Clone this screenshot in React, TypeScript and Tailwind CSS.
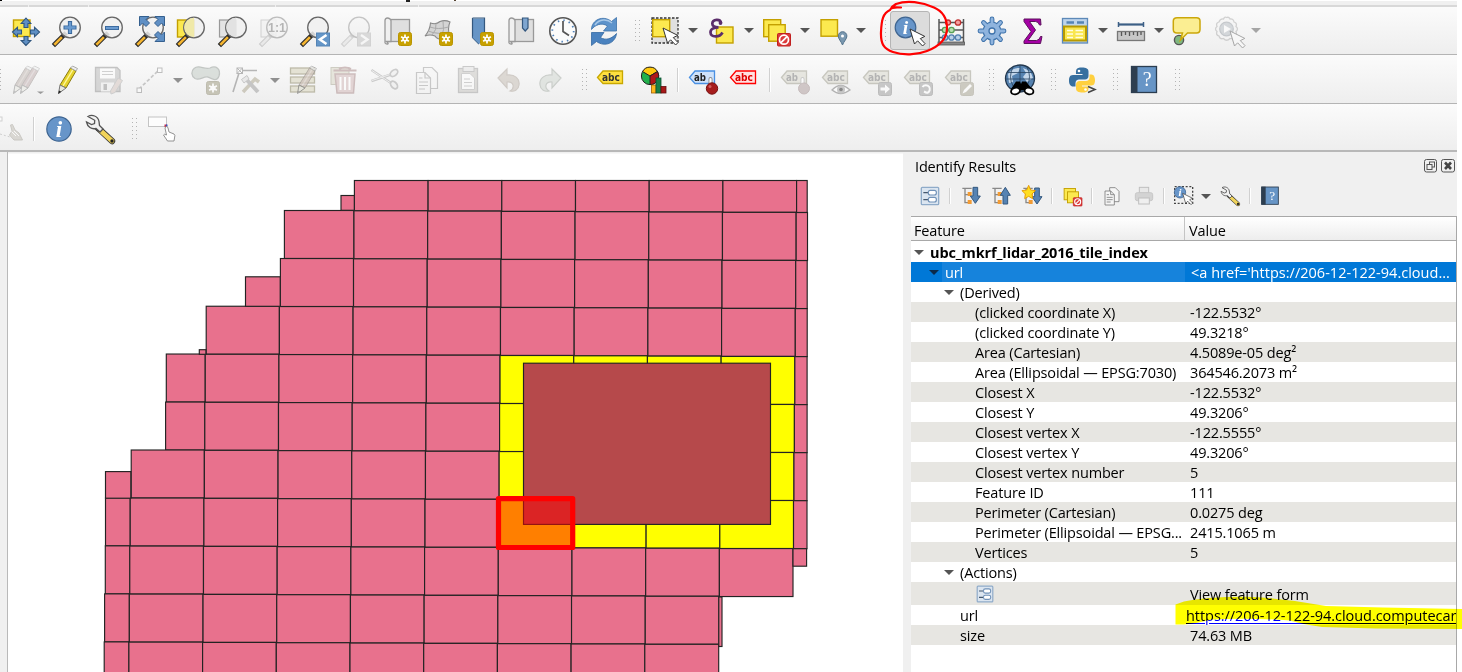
import React from "react";

type Kids = { children?: React.ReactNode; className?: string };

/* ---------- shared drawing pieces ---------- */

function Ico({ children, className = "" }: Kids) {
  return (
    <svg width="30" height="30" viewBox="0 0 30 30" className={"shrink-0 overflow-visible " + className}>
      {children}
    </svg>
  );
}

function Slot({ children, className = "w-[41.2px]" }: Kids) {
  return <div className={"flex h-full shrink-0 items-center justify-center " + className}>{children}</div>;
}

function Arrow({ className = "w-[15px]", color = "#555" }: { className?: string; color?: string }) {
  return (
    <div className={"flex h-full shrink-0 items-center justify-center " + className}>
      <svg width="10" height="5" viewBox="0 0 10 5">
        <path d="M0 0H10L5 5Z" fill={color} />
      </svg>
    </div>
  );
}

function Handle({ className = "" }: { className?: string }) {
  return (
    <div className={"flex h-full shrink-0 items-center " + className}>
      <svg width="6" height="22" viewBox="0 0 6 22">
        {[0, 4, 8, 12, 16, 20].map((y) => (
          <g key={y} fill="#b4b4b4">
            <rect x="0" y={y} width="1" height="1" />
            <rect x="4" y={y} width="1" height="1" />
          </g>
        ))}
      </svg>
    </div>
  );
}

function Sep({ className = "h-6" }: { className?: string }) {
  return <div className={"w-[2px] shrink-0 border-l border-r border-l-[#d0d0d0] border-r-white " + className} />;
}

function Lens({ children, gray = false }: { children?: React.ReactNode; gray?: boolean }) {
  return (
    <g>
      <path d="M3 28L12.500 18.500" stroke={gray ? "#999" : "#2a2a2a"} strokeWidth="4.600" strokeLinecap="square" />
      <path d="M3.200 27.800L9 22" stroke={gray ? "#ddd" : "#f5b530"} strokeWidth="2.600" strokeLinecap="square" />
      <circle cx="18" cy="11.500" r="10.300" fill="#f0f0f0" fillOpacity="0.85" stroke="#666" strokeWidth="1.300" />
      {children}
    </g>
  );
}

function Badge() {
  return (
    <g>
      <rect x="15.500" y="16.500" width="13" height="13" rx="2" fill="#c8a100" stroke="#b89400" />
      <path d="M22 18.500V27.500M18.100 20.800L25.900 25.200M18.100 25.200L25.900 20.800" stroke="#fff" strokeWidth="1.700" />
      <circle cx="22" cy="23" r="2.600" fill="#fff" />
      <circle cx="22" cy="23" r="1.100" fill="#c8a100" />
    </g>
  );
}

function Cursor({ x = 0, y = 0 }: { x?: number; y?: number }) {
  return (
    <path
      transform={`translate(${x} ${y})`}
      d="M0 0L4.500 15L7.600 11.800L12.600 17L15 14.600L10.300 9.600L14.800 7.400Z"
      fill="#fff"
      stroke="#333"
      strokeWidth="1"
    />
  );
}

function Tag({ fill, stroke, color, text = "abc" }: { fill: string; stroke: string; color: string; text?: string }) {
  return (
    <g>
      <path d="M2.500 12.500L8 6H27.500V18.500H8Z" fill={fill} stroke={stroke} strokeWidth="1.300" />
      <text x="7" y="16.200" fontSize="10.500" fontWeight="700" fill={color} fontFamily="'DejaVu Sans', sans-serif" textLength={text === "ab" ? 12 : 18} lengthAdjust="spacingAndGlyphs">
        {text}
      </text>
    </g>
  );
}

function Pencil({ body = "#e5d22c", dark = "#8a7a10", shine = "#fff7a0", lead = "#222", x = 0 }: { body?: string; dark?: string; shine?: string; lead?: string; x?: number }) {
  return (
    <g transform={`translate(${x} 0)`}>
      <path d="M7 20L17.500 3L23 6L13 23Z" fill={body} stroke={dark} strokeWidth="1" />
      <path d="M10 21L20 4.500" stroke={shine} strokeWidth="1.400" />
      <path d="M17.500 3L19.500 1L24.500 3.500L23 6Z" fill="#eee" stroke="#999" strokeWidth=".8" />
      <path d="M7 20L5.500 28.500L13 23Z" fill="#e8e8e0" stroke="#777" strokeWidth="1" />
      <path d="M6 25.500L5.200 29L8.300 26.800Z" fill={lead} />
    </g>
  );
}

function InfoDisc({ cx, cy, r }: { cx: number; cy: number; r: number }) {
  return (
    <g>
      <circle cx={cx} cy={cy} r={r} fill="#6795c9" stroke="#3f6591" strokeWidth="1.200" />
      <text x={cx} y={cy + r * 0.62} fontSize={r * 1.9} fontWeight="700" fontStyle="italic" fill="#fff" textAnchor="middle" fontFamily="'Liberation Serif', serif">
        i
      </text>
    </g>
  );
}

function Wrench() {
  return (
    <g>
      <path d="M13 14L27 27" stroke="#333" strokeWidth="6.400" strokeLinecap="round" />
      <path d="M16 17L27 27" stroke="#f0d35a" strokeWidth="4.600" strokeLinecap="round" />
      <path
        d="M3 2.500C7 0 13 2 14 7.500L14.500 11.500L18 15L15 18L11 14.500C6.500 15.500 2.500 13 1.500 8L6.500 10.500L9.500 9.500L9.700 6.300Z"
        fill="#f1f1f1"
        stroke="#555"
        strokeWidth="1.300"
      />
      <circle cx="27" cy="27" r="1.700" fill="#222" />
    </g>
  );
}

function Book() {
  return (
    <g>
      <rect x="2.500" y="1.500" width="25" height="26" fill="#6795c6" stroke="#2b3d50" strokeWidth="1.300" />
      <rect x="2" y="1" width="6.500" height="27" fill="#2d3e50" />
      <text x="18.200" y="21" fontSize="20" fill="#fff" textAnchor="middle" fontFamily="'Liberation Serif', serif">
        ?
      </text>
    </g>
  );
}

function FormIcon() {
  return (
    <g>
      <rect x="2" y="2" width="26" height="26" rx="1.500" fill="#dbe5f0" stroke="#8fabc9" strokeWidth="2" />
      <path d="M5 10H12M5 20.500H12" stroke="#45586d" strokeWidth="2" />
      <rect x="12.500" y="6.500" width="12" height="7" rx="3" fill="#fff" stroke="#7192b8" strokeWidth="1.800" />
      <rect x="12.500" y="17" width="12" height="7" rx="3" fill="#fff" stroke="#7192b8" strokeWidth="1.800" />
    </g>
  );
}

function Layers() {
  return (
    <g>
      <rect x="1.700" y="3.700" width="17" height="17" fill="#fce94f" stroke="#c4a000" strokeWidth="1.400" />
      <rect x="6.700" y="8.700" width="16.500" height="16.500" fill="#fce94f" stroke="#c4a000" strokeWidth="1.400" />
      <rect x="15.500" y="17.500" width="13" height="12.500" rx="1" fill="#dc3a3a" stroke="#c02020" />
      <circle cx="22" cy="23.700" r="4.500" fill="none" stroke="#fff" strokeWidth="1.700" />
      <path d="M19 26.700L25 20.700" stroke="#fff" strokeWidth="1.700" />
    </g>
  );
}

function Pages() {
  return (
    <g fill="#f6f6f6" stroke="#777" strokeWidth="1.200">
      <path d="M11.500 2.500H20L25.500 8V23.500H11.500Z" />
      <path d="M4.500 7.500H13L18.500 13V28.500H4.500Z" />
      <path d="M13 7.500V13H18.500M7 13H10.500M7 17H16M7 20.500H16M7 24H13" fill="none" />
    </g>
  );
}

function Scroll() {
  return (
    <g fill="#dfdfdf" stroke="#999" strokeWidth="1.300">
      <rect x="6" y="3.500" width="20.500" height="22" />
      <path d="M2 4.500Q2 2 4.500 2T8 4.500V25.500H3.500Q6.500 28 4 28T2 25Z" fill="#f0f0f0" />
    </g>
  );
}

/* ---------- toolbars ---------- */

function NavigationToolbar() {
  return (
    <div className="flex h-[48px] w-full items-center border-b border-[#b4b4b4] bg-gradient-to-b from-[#fbfbfb] to-[#eeeeee] pl-[5.400px]">
      <Slot className="w-[41.300px]">
        <Ico>
          <rect x="2.500" y="4" width="16.500" height="16.500" fill="#fce94f" stroke="#c4a000" strokeWidth="1.400" />
          <g fill="#5f8fc4" stroke="#2f567f" strokeWidth="1.100">
            <path d="M15 2L19.800 7.500H17V11.500H13V7.500H10.200Z" />
            <path d="M15 29.500L10.200 24.500H13V20.500H17V24.500H19.800Z" />
            <path d="M1.500 16L6.500 11.200V14H10.500V18H6.500V20.800Z" />
            <path d="M28.500 16L23.500 20.800V18H19.500V14H23.500V11.200Z" />
          </g>
        </Ico>
      </Slot>
      <Slot className="w-[41.300px]">
        <Ico><Lens><path d="M18 5V18M11.500 11.500H24.500" stroke="#39689c" strokeWidth="4.200" /><path d="M18 6V17M12.500 11.500H23.500" stroke="#6a9bd0" strokeWidth="2.400" /></Lens></Ico>
      </Slot>
      <Slot className="w-[41.300px]">
        <Ico><Lens><path d="M11 12H25" stroke="#39689c" strokeWidth="4" /><path d="M12 12H24" stroke="#6a9bd0" strokeWidth="2.200" /></Lens></Ico>
      </Slot>
      <Slot className="w-[41.300px]">
        <Ico>
          <Lens />
          <g fill="#5f8fc4" stroke="#35608f" strokeWidth="1">
            <path d="M4.500 .500H14L11 3.500L14.500 7L11 10.500L7.500 7L4.500 10Z" />
            <path d="M29.500 .500V10L26.500 7L23 10.500L19.500 7L23 3.500L20 .500Z" />
            <path d="M29.500 25.500H20L23 22.500L19.500 19L23 15.500L26.500 19L29.500 16Z" />
          </g>
        </Ico>
      </Slot>
      <Slot className="w-[41.300px]">
        <Ico>
          <rect x="1.500" y="4" width="16.500" height="17" fill="#fce94f" stroke="#c4a000" strokeWidth="1.400" />
          <Lens><path d="M18 1.700A9.700 9.700 0 0 0 18 21.200Z" fill="#f0e9a8" /></Lens>
        </Ico>
      </Slot>
      <Slot className="w-[41.300px]">
        <Ico>
          <rect x="1.500" y="4" width="16.500" height="17" fill="#e3e3e3" stroke="#999" strokeWidth="1.200" />
          <Lens><path d="M18 1.700A9.700 9.700 0 0 0 18 21.200Z" fill="#e2e2e2" /></Lens>
        </Ico>
      </Slot>
      <Slot className="w-[41.300px]">
        <Ico className="opacity-40">
          <rect x="2" y="4" width="15" height="17" fill="#eee" stroke="#999" />
          <Lens gray><text x="18" y="16" fontSize="12.500" fontWeight="700" textAnchor="middle" fill="#555" fontFamily="'Liberation Sans', sans-serif">1:1</text></Lens>
        </Ico>
      </Slot>
      <Slot className="w-[41.300px]">
        <Ico>
          <Lens />
          <rect x="16.500" y="17" width="13" height="13" fill="#6496c8" stroke="#5584b5" />
          <path d="M26.500 19L20 23.500L26.500 28" fill="none" stroke="#fff" strokeWidth="2.600" />
        </Ico>
      </Slot>
      <Slot className="w-[41.300px]">
        <Ico className="opacity-35">
          <Lens gray />
          <rect x="16.500" y="17" width="13" height="13" fill="#aaa" stroke="#999" />
          <path d="M20 19L26.500 23.500L20 28" fill="none" stroke="#fff" strokeWidth="2.400" />
        </Ico>
      </Slot>
      <Slot className="w-[41.300px]"><Ico><Scroll /><Badge /></Ico></Slot>
      <Slot className="w-[41.300px]">
        <Ico>
          <path d="M1 20Q6 14 6.500 7Q12 9 16 5.500Q21 3.500 26 6Q23 12 26 23Q14 25 11 20Q6 18 1 20Z" fill="#d4d4d4" stroke="#888" strokeWidth="1.100" />
          <path d="M4 15Q14 19 24.500 16M6 11Q14 14 24.500 11M12 7.500Q13 14 8 19M19 5Q21 13 17 23" fill="none" stroke="#aaa" />
          <Badge />
        </Ico>
      </Slot>
      <Slot className="w-[41.300px]">
        <Ico>
          <path d="M7.500 2.500H19.500V27.500L7.500 21.500Z" fill="#6795c6" />
          <path d="M7.500 2H19.500V17M7.500 2V21.500L14 28" fill="none" stroke="#34587f" strokeWidth="1.200" />
          <path d="M7.500 21.500L14 28L17 25V20H8Z" fill="#6795c6" />
          <Badge />
        </Ico>
      </Slot>
      <Slot className="w-[41.300px]">
        <Ico><Scroll /><path d="M15.500 2H21V12L18.200 15L15.500 12Z" fill="#7fa6d0" stroke="#34587f" strokeWidth="1.200" /></Ico>
      </Slot>
      <Slot className="w-[41.300px]">
        <Ico>
          <circle cx="15" cy="15" r="13.200" fill="#fbfbfb" stroke="#555" strokeWidth="1.600" />
          <circle cx="15" cy="15" r="10.700" fill="none" stroke="#4f80b8" strokeWidth="1.800" strokeDasharray="1.500 4.100" />
          <path d="M15 5V15.500L21 19.500" fill="none" stroke="#555" strokeWidth="1.700" />
        </Ico>
      </Slot>
      <Slot className="w-[41.300px]">
        <Ico>
          <path d="M2.500 13.500C2.500 4 14 -1.500 22.500 5.500L27.500 1.500V15H14.500L18.500 10C12.500 6 6 9 2.500 13.500Z" fill="#5d93cb" stroke="#3c71a9" strokeWidth=".8" />
          <path d="M27.500 17.500C26.500 27 16 31.500 7.500 25.500L2.500 29.500V16.500H15L11.500 21.500C17 25 23 22.500 27.500 17.500Z" fill="#4a82bf" stroke="#3569a2" strokeWidth=".8" />
          <path d="M6 9C10 3 18 2.500 23 7" stroke="#a8c8e8" strokeWidth="1.500" fill="none" />
        </Ico>
      </Slot>
      <Handle className="ml-[10px] mr-[3.500px]" />
      <Slot className="w-[41px]">
        <Ico>
          <rect x="2" y="2" width="26" height="25" fill="#e0e0e0" stroke="#333" strokeDasharray="2.500 1.500" strokeWidth="1.300" />
          <rect x="2.700" y="3.700" width="17" height="17" fill="#fce94f" stroke="#c4a000" strokeWidth="1.400" />
          <Cursor x={13} y={12} />
        </Ico>
      </Slot>
      <Arrow />
      <Slot className="w-[41px]">
        <Ico>
          <rect x="10.500" y="11" width="16.500" height="16" fill="#fce94f" stroke="#c4a000" strokeWidth="1.400" />
          <path d="M15 7C14.500 2.500 6.500 3 6.300 7.500C6.200 10.500 9 11.300 12.500 11.300C8 11.500 4.300 13 4.500 16.500C4.800 21.500 13.500 22 16.500 16.500" fill="none" stroke="#5b2d6b" strokeWidth="2.700" />
          <circle cx="14.500" cy="7" r="1.900" fill="#5b2d6b" />
        </Ico>
      </Slot>
      <Arrow />
      <Slot className="w-[41px]"><Ico><Layers /></Ico></Slot>
      <Arrow />
      <Slot className="w-[41px]">
        <Ico>
          <rect x="3" y="3.700" width="16.500" height="16.500" fill="#fce94f" stroke="#c4a000" strokeWidth="1.400" />
          <path d="M24.500 29C23 25 20.300 23 20.300 20A4.300 4.300 0 0 1 28.900 20C28.900 23 26 25 24.500 29Z" fill="#7a98b0" stroke="#54738c" />
          <circle cx="24.500" cy="20" r="1.500" fill="#fff" />
        </Ico>
      </Slot>
      <Arrow />
      <Handle className="ml-[13px] mr-[2px]" />
      <Slot className="w-[41px]">
        <div className="flex h-[39px] w-[40px] items-center justify-center rounded-[3px] border-[1.500px] border-[#b5b5b5] bg-[#dcdcdc]">
          <Ico><InfoDisc cx={10.5} cy={11.5} r={10.3} /><Cursor x={15} y={13} /></Ico>
        </div>
      </Slot>
      <Slot className="w-[41px]">
        <Ico>
          <path d="M3 3V26M27.500 3V26M3 6.500H27.500M3 14H27.500M3 21.500H27.500" fill="none" stroke="#555" strokeWidth="1.500" />
          <rect x="2" y="26" width="26.500" height="3" fill="#888" stroke="#555" strokeWidth=".8" />
          <g strokeWidth="1.300">
            <g fill="#f4a0a0" stroke="#c03030"><circle cx="12" cy="6.500" r="2.500" /><circle cx="22" cy="6.500" r="2.700" /></g>
            <g fill="#b8e0b0" stroke="#58a058"><circle cx="9" cy="14" r="2.700" /><circle cx="15.500" cy="14" r="2.700" /></g>
            <g fill="#b9d0e8" stroke="#5080b0"><circle cx="9" cy="21.500" r="2.700" /><circle cx="15.500" cy="21.500" r="2.700" /><circle cx="22" cy="21.500" r="2.700" /></g>
          </g>
        </Ico>
      </Slot>
      <Slot className="w-[41px]">
        <Ico>
          <path d="M15 3V27M3 15H27M6.500 6.500L23.500 23.500M23.500 6.500L6.500 23.500" stroke="#3f73ab" strokeWidth="4.800" strokeLinecap="round" />
          <circle cx="15" cy="15" r="8.800" fill="#8fb4de" stroke="#3f73ab" strokeWidth="1.200" />
          <path d="M15 3V27M3 15H27M6.500 6.500L23.500 23.500M23.500 6.500L6.500 23.500" stroke="#8fb4de" strokeWidth="2.800" strokeLinecap="round" />
          <circle cx="15" cy="15" r="3" fill="#f4f4f4" stroke="#3f73ab" strokeWidth="1.300" />
        </Ico>
      </Slot>
      <Slot className="w-[42px]">
        <Ico><path d="M6 3H22.500L23 9H21.500Q20.500 5.500 17.500 5.500H11.500L17.500 14L10 24.500H18.500Q21.500 24 22.500 20.500H24L22.500 27.500H6V25L13 15.500L6 5.500Z" fill="#a500a5" stroke="#5d125d" strokeWidth="1" /></Ico>
      </Slot>
      <Slot className="w-[41px]">
        <Ico>
          <rect x="2.500" y="2.500" width="25" height="24.500" fill="#bdd4eb" stroke="#5d89b8" strokeWidth="1.300" />
          <path d="M6.500 6.500H14M17 6.500H24" stroke="#5584b5" strokeWidth="2.600" />
          <rect x="4" y="10.500" width="22" height="14" fill="#f9e64e" stroke="#b89a00" strokeWidth="2" />
          <path d="M7 14.500H13M15.500 14.500H23M7 18H13M15.500 18H23M7 21.500H13M15.500 21.500H23" stroke="#fffde0" strokeWidth="1.600" />
        </Ico>
      </Slot>
      <Arrow />
      <Slot className="w-[41px]">
        <Ico>
          <path d="M2 8.500H28" stroke="#3c5f86" strokeWidth="2.200" />
          <path d="M2.500 6V11M27.500 6V11" stroke="#3c5f86" strokeWidth="1.500" />
          <rect x="1.500" y="15.500" width="27" height="9" fill="#c7c7c7" stroke="#777" strokeWidth="1.300" />
          <path d="M5.500 16V20M9.500 16V19M13.500 16V20M17.500 16V19M21.500 16V20M25 16V19" stroke="#555" strokeWidth="1.300" />
        </Ico>
      </Slot>
      <Arrow />
      <Slot className="w-[41px]">
        <Ico>
          <circle cx="7" cy="24" r="4.600" fill="#7fb77f" stroke="#555" strokeWidth="1.400" />
          <path d="M5 1.700H24.500Q28 1.700 28 5V13.500Q28 17 24.500 17H15.500L8.500 24L10.500 17H5Q1.300 17 1.300 13.500V5Q1.300 1.700 5 1.700Z" fill="#fbee92" stroke="#cba70a" strokeWidth="1.500" />
        </Ico>
      </Slot>
      <Slot className="w-[41px]">
        <Ico className="opacity-40">
          <path d="M13.500 1.500Q16 .5 17 3Q20.500 2.500 21 6Q24.500 7 23 10.500Q26 13 23 15.500Q24.500 19 21 20Q20.500 23.500 17 22.500Q13.500 26 10.500 22.500Q7 23.500 6 20Q2.500 19 4 15.500Q1 13 4 10.500Q2.500 7 6 6Q7 2.500 10.500 3Q11.500 .5 13.500 1.500Z" fill="#f4f4f4" stroke="#999" strokeWidth="1.300" />
          <circle cx="13.500" cy="13" r="6.800" fill="#a5adb5" stroke="#7d868e" strokeWidth="1.200" />
          <path d="M11 9L18 13L11 17Z" fill="#fff" />
          <Cursor x={17} y={15} />
        </Ico>
      </Slot>
      <Arrow color="#a5a5a5" />
    </div>
  );
}

function EditingToolbar() {
  const gray = { fill: "#dddcd2", stroke: "#aaa99c", color: "#888" };
  return (
    <div className="flex h-[49px] w-full items-center border-b border-[#b4b4b4] bg-gradient-to-b from-[#fbfbfb] to-[#eeeeee] pt-[2px]">
      <Handle className="-ml-[4px] mr-[4px]" />
      <Slot className="w-[41px]">
        <Ico>
          <g opacity=".45">
            <Pencil x={-4} body="#b4a8a2" dark="#8d8480" shine="#ccc2bc" lead="#888" />
            <Pencil x={3} body="#b8a2a2" dark="#8d8480" shine="#d0c4c4" lead="#888" />
          </g>
          <path d="M25 26.500H32L28.500 29Z" fill="#999" />
        </Ico>
      </Slot>
      <Slot className="w-[41px]"><Ico><Pencil /></Ico></Slot>
      <Slot>
        <Ico className="opacity-40">
          <path d="M1.500 2.500H23L26 5.500V26.500H1.500Z" fill="#aaa" stroke="#777" strokeWidth="1.300" />
          <rect x="6" y="3.500" width="15" height="10" fill="#fff" /><path d="M8 6.500H19M8 9.500H19" stroke="#999" />
          <rect x="7" y="17.500" width="13" height="9" fill="#eee" /><rect x="9.500" y="19" width="3.500" height="6" fill="#777" />
          <path d="M16.500 26L24 13L28.500 15.500L21 27.500L17 29Z" fill="#ccb8b0" stroke="#999" />
        </Ico>
      </Slot>
      <Slot>
        <Ico className="opacity-50">
          <path d="M4 24L24 5" stroke="#999" strokeWidth="1.700" strokeDasharray="3.500 2" />
          <rect x="2" y="23" width="4.500" height="4.500" fill="#fff" stroke="#888" /><rect x="22.500" y="3" width="4.500" height="4.500" fill="#fff" stroke="#888" />
        </Ico>
      </Slot>
      <Arrow color="#909090" />
      <Slot className="w-[41px]">
        <Ico className="opacity-65">
          <path d="M3 3.500C8 -1 13 5 19 3C25 0 30 4 28 11C26 17 21 14 17 12C12 11 9 16 4 13.500C0 11 0 6 3 3.500Z" fill="#ccd3ce" stroke="#a6aca8" strokeWidth="1.300" />
          <rect x="15.500" y="16.500" width="13" height="13" rx="2" fill="#b0ad98" stroke="#a29f8b" />
          <path d="M22 18.500V27.500M18.100 20.800L25.900 25.200M18.100 25.200L25.900 20.800" stroke="#fff" strokeWidth="1.700" />
          <circle cx="22" cy="23" r="2.600" fill="#fff" />
        </Ico>
      </Slot>
      <Slot className="w-[41px]">
        <Ico className="opacity-50">
          <path d="M1 27L7 8M10 5.500H25" fill="none" stroke="#777" strokeWidth="1.600" />
          <rect x="5" y="3" width="5.500" height="5.500" fill="#fff" stroke="#777" /><path d="M5 3L10.500 8.500M10.500 3L5 8.500" stroke="#777" />
          <path d="M11 27L23 14L27 17" fill="none" stroke="#aaa38c" strokeWidth="3.500" />
          <path d="M13 13L26 27" stroke="#999" strokeWidth="4" /><path d="M9.500 14.500L15 10.500L17 14L12 18Z" fill="#ddd" stroke="#999" />
        </Ico>
      </Slot>
      <Arrow color="#909090" />
      <Slot>
        <Ico>
          <g fill="#e4e2d4" stroke="#bdbba9" strokeWidth="1.300"><rect x="2.500" y="3" width="24" height="6" /><rect x="2.500" y="12" width="24" height="6" /><rect x="2.500" y="21" width="24" height="6" /></g>
          <g opacity=".7"><Pencil x={4} body="#d0c4bc" dark="#a09894" shine="#e2dad6" lead="#999" /></g>
        </Ico>
      </Slot>
      <Slot>
        <Ico className="opacity-60">
          <rect x="2" y="2.500" width="18" height="17" fill="#dcdacb" stroke="#b3b1a0" />
          <path d="M6 9H26L24.500 28H8Z" fill="#d7c0c0" stroke="#b49898" strokeWidth="1.500" />
          <path d="M4.500 5.500H27.500M10 4Q16 1 22 4" stroke="#b49898" strokeWidth="2.200" fill="none" />
          <path d="M11.500 12V25M16 12V25M20.500 12V25" stroke="#fff" strokeWidth="2" />
        </Ico>
      </Slot>
      <Slot>
        <Ico className="opacity-45">
          <path d="M1.500 5L21 18M1.500 16L21 9.500" stroke="#999" strokeWidth="2.400" /><path d="M2 5.500L20 17.500M2 15.500L20 9.500" stroke="#e5e5e5" strokeWidth="1" />
          <ellipse cx="24" cy="8" rx="4.300" ry="2.800" transform="rotate(-40 24 8)" fill="#eee" stroke="#999" strokeWidth="1.800" />
          <ellipse cx="24" cy="20" rx="2.800" ry="4.300" fill="#eee" stroke="#999" strokeWidth="1.800" transform="rotate(-40 24 20)" />
        </Ico>
      </Slot>
      <Slot><Ico className="opacity-35"><Pages /></Ico></Slot>
      <Slot>
        <Ico className="opacity-40">
          <rect x="5.500" y="3.500" width="19" height="24" fill="#bcbab4" stroke="#888" strokeWidth="1.300" />
          <rect x="10" y="1.500" width="11" height="5" fill="#ddd" stroke="#888" />
          <path d="M8.500 8.500H17L21.500 13V24.500H8.500Z" fill="#fff" stroke="#999" /><path d="M11 14H17M11 17.500H19M11 21H19" stroke="#999" />
        </Ico>
      </Slot>
      <Slot>
        <Ico className="opacity-60"><path d="M4 13L13 4V10C21 9 26 14 25 20C24.500 25 20 27 16 26C21 23 20 16.500 13 17V23Z" fill="#ccc5bd" stroke="#b8b0a8" strokeWidth="1.200" /></Ico>
      </Slot>
      <Slot>
        <Ico className="opacity-60"><path d="M26 13L17 4V10C9 9 4 14 5 20C5.500 25 10 27 14 26C9 23 10 16.500 17 17V23Z" fill="#d4dad4" stroke="#b0b6b0" strokeWidth="1.200" /></Ico>
      </Slot>
      <Handle className="ml-[11px] mr-[1.500px]" />
      <Slot className="w-[41px]"><Ico><Tag fill="#ffe040" stroke="#c9a800" color="#333" /></Ico></Slot>
      <Slot className="ml-[2px] w-[42px]">
        <Ico>
          <circle cx="12" cy="11" r="8.600" fill="#22b14c" stroke="#222" />
          <path d="M12 11L4.500 6.500A8.600 8.600 0 0 1 19.500 6.500Z" fill="#ffc90e" stroke="#222" />
          <path d="M12 11L19.500 6.500A8.600 8.600 0 0 1 12 19.600Z" fill="#b01818" stroke="#222" />
          <rect x="13.500" y="20" width="4.500" height="8" fill="#ffb81e" stroke="#a06000" strokeWidth=".8" />
          <rect x="18" y="13" width="5" height="15" fill="#188048" stroke="#0c5030" strokeWidth=".8" />
          <rect x="23" y="21.500" width="5" height="6.500" fill="#a81818" stroke="#601010" strokeWidth=".8" />
        </Ico>
      </Slot>
      <Sep className="ml-[3px] h-6" />
      <Slot className="ml-[2px] w-[41px]">
        <Ico>
          <Tag fill="#cfe2fa" stroke="#4a90e2" color="#222" text="ab" />
          <path d="M23.500 22V14" stroke="#888" strokeWidth="4" strokeLinecap="round" /><path d="M23.500 21V14" stroke="#fff" strokeWidth="2.200" strokeLinecap="round" />
          <circle cx="25" cy="23.500" r="5.700" fill="#a61d1d" stroke="#711" /><circle cx="23" cy="21.500" r="1.500" fill="#d06060" />
        </Ico>
      </Slot>
      <Slot className="w-[41px]"><Ico><Tag fill="#ffe0e0" stroke="#f00" color="#e00000" /></Ico></Slot>
      <Sep className="ml-[6px] h-6" />
      <Slot className="ml-[2px] w-[41px]">
        <Ico className="opacity-60">
          <Tag {...gray} text="ab" />
          <path d="M23.500 22V14" stroke="#aaa" strokeWidth="4" strokeLinecap="round" /><path d="M23.500 21V14" stroke="#fff" strokeWidth="2.200" strokeLinecap="round" />
          <circle cx="25" cy="23.500" r="5.500" fill="#b9aaaa" stroke="#a99" />
        </Ico>
      </Slot>
      <Slot>
        <Ico className="opacity-60">
          <Tag {...gray} />
          <path d="M12 25Q20.500 16 30 25Q20.500 32 12 25Z" fill="#fff" stroke="#888" strokeWidth="1.300" /><circle cx="21" cy="24.500" r="4" fill="#aaa" /><circle cx="21" cy="24.500" r="1.800" fill="#444" />
        </Ico>
      </Slot>
      <Slot>
        <Ico className="opacity-60">
          <Tag {...gray} /><rect x="17.500" y="17.500" width="13" height="13" rx="2" fill="#aaa" stroke="#999" />
          <path d="M19.500 22.500H24V19.500L29 24L24 28.500V25.500H19.500Z" fill="#fff" />
        </Ico>
      </Slot>
      <Slot>
        <Ico className="opacity-60">
          <Tag {...gray} /><rect x="17.500" y="17.500" width="13" height="13" rx="2" fill="#aaa" stroke="#999" />
          <path d="M20.500 22A4 4 0 1 1 25 28M25 28L22 26.500" fill="none" stroke="#fff" strokeWidth="2" />
        </Ico>
      </Slot>
      <Slot>
        <Ico className="opacity-60">
          <Tag {...gray} /><rect x="17.500" y="17.500" width="13" height="13" rx="2" fill="#b3b0a0" stroke="#aaa799" />
          <path d="M19.500 28.500L21 25L27 19L29 21L23 27Z" fill="#fff" />
        </Ico>
      </Slot>
      <Handle className="ml-[10px] mr-[4px]" />
      <Slot className="ml-[1px] w-[41px]">
        <Ico>
          <ellipse cx="15" cy="13.500" rx="14.500" ry="13.500" fill="#5582b0" stroke="#23384f" strokeWidth="1.300" />
          <path d="M3 9Q8 2 15 3L13 8L7 11L8 17L4 18ZM18 3Q26 5 28 13L22 17L18 12L21 8Z" fill="#c3d6ea" />
          <path d="M1 14H29M3 7.500H27M15 .5V20M8 2Q3 12 8 21M22 2Q27 12 22 21" fill="none" stroke="#27435f" strokeWidth=".8" />
          <path d="M6 24L11 16.500H15L16 19L17 16.500H21L27 24L18 25.500H15Z" fill="#000" />
          <ellipse cx="10.500" cy="26" rx="4.500" ry="3.200" fill="#fff" stroke="#000" strokeWidth="1.800" transform="rotate(-15 10.500 26)" />
          <ellipse cx="24" cy="26" rx="4.500" ry="3.200" fill="#fff" stroke="#000" strokeWidth="1.800" transform="rotate(15 24 26)" />
        </Ico>
      </Slot>
      <Handle className="ml-[10px] mr-[5px]" />
      <Slot className="w-[41px]">
        <Ico>
          <path d="M15 2.500C8.500 2.500 9 5 9 9H15.500V10H6C2.500 10 2 13 2 16S3.500 21.500 6 21.500H8.500V18C8.500 15.500 10.500 14.500 12 14.500H18C20 14.500 21.500 13 21.500 11V6.500C21.500 3.500 19 2.500 15 2.500Z" fill="#376f9f" />
          <path d="M15.500 27.500C22 27.500 21.500 25 21.500 21.500H15V20.500H24.500C27.500 20.500 28 17.500 28 15S27 9.500 24.500 9.500H22.500V12.500C22.500 15 20.500 16 19 16H12.500C10.500 16 9 17.500 9 19.500V23.500C9 26.500 12 27.500 15.500 27.500Z" fill="#ffd03f" />
          <circle cx="12" cy="6" r="1.300" fill="#fff" /><circle cx="18.500" cy="24.500" r="1.300" fill="#fff" />
          <path d="M21 21.500L28 24.500L21 27.500" fill="none" stroke="#444" strokeWidth="1.500" />
        </Ico>
      </Slot>
      <Handle className="ml-[10px] mr-[5px]" />
      <Slot className="w-[41px]"><Ico><Book /></Ico></Slot>
      <Handle className="ml-[10px]" />
    </div>
  );
}

function AttributesToolbar() {
  return (
    <div className="flex h-[46px] w-full items-center bg-gradient-to-b from-[#fbfbfb] to-[#eeeeee] pt-[3px]">
      <Slot className="w-[33px]">
        <Ico className="opacity-40">
          <rect x="-5" y="3" width="5" height="4" fill="#fff" stroke="#999" />
          <path d="M-2 20L8 23" stroke="#999" strokeDasharray="2 2" />
          <path d="M8.500 11L10.500 10.500L13 16L17 19L20.500 26L12 26L7.500 21L10 17Z" fill="#b5b0a4" stroke="#8b877c" />
          <path d="M9.500 17.500L14 22M12 17L17 22" stroke="#fff" />
        </Ico>
      </Slot>
      <Sep className="h-6" />
      <Slot className="ml-[2px] w-[41px]"><Ico><InfoDisc cx={16} cy={15} r={12.2} /></Ico></Slot>
      <Slot className="w-[44px]"><Ico><Wrench /></Ico></Slot>
      <Handle className="ml-[10px] mr-[4px]" />
      <Slot className="w-[38px]">
        <Ico>
          <rect x="2.500" y="3" width="18" height="9.500" fill="#fdfdfd" stroke="#c4c4c4" />
          <rect x="18.500" y="10.500" width="2.500" height="2.500" fill="#c03050" /><rect x="20" y="10.500" width="1.500" height="2" fill="#3050c0" />
          <path d="M20 12.500Q21.500 12 22 14L23 18L28 20Q29.500 21 28.500 24L28 27H21.500L17.500 21Q18 19.500 20.500 21L19 14Z" fill="#fff" stroke="#888" strokeWidth=".9" />
        </Ico>
      </Slot>
    </div>
  );
}

/* ---------- map canvas ---------- */

type Cell = { x: number; y: number; w: number; h: number; fill: string };

const PINK = "#e8718d";
const YELLOW = "#ffff00";
const LEFT = [354.4, 284.4, 280.4, 206.2, 166.3, 165.6, 131.2, 105.5, 105.3, 104.6, 104.2];
const RIGHT = [807.2, 807.5, 807.2, 807.2, 807.1, 807.1, 807, 807, 793, 718.9, 718.7];

function buildCells(): Cell[] {
  const cells: Cell[] = [];
  LEFT.forEach((left, r) => {
    const shift = r * 0.44;
    const edges = [left];
    for (let c = -6; c <= 4; c++) {
      const x = 501.8 + c * 73.7 - shift;
      if (x > left + 2 && x < RIGHT[r] - 2) edges.push(x);
    }
    edges.push(RIGHT[r]);
    for (let i = 0; i < edges.length - 1; i++) {
      const x = edges[i];
      const mid = (x + edges[i + 1]) / 2;
      const lift = (mid - 350) * 0.0042;
      const y = r === 0 ? 180.5 : 162.6 + r * 48.03 + lift;
      const bottom = 210.6 + r * 48.03 + lift;
      const yellow = r >= 4 && r <= 7 && mid > 499 && mid < 794;
      cells.push({ x, y, w: edges[i + 1] - x, h: bottom - y, fill: yellow ? YELLOW : PINK });
    }
  });
  const extra = [
    [341, 195.5, 13.3, 14.8],
    [245.5, 276.8, 34.7, 29.5],
    [199.3, 349.7, 6.6, 4.6],
    [105.5, 471.6, 25.3, 26.6],
    [793, 548.7, 13.6, 17.5],
    [718.8, 597, 3.2, 49.5],
  ];
  extra.forEach(([x, y, w, h]) => cells.push({ x, y, w, h, fill: PINK }));
  return cells;
}

const CELLS = buildCells();

function MapCanvas() {
  return (
    <div className="h-full w-[896px] shrink-0 overflow-hidden border-l border-[#b9b9b9] bg-white">
      <svg width="895" height="520" viewBox="8 152 895 520" className="block">
        <rect x="8" y="152" width="895" height="1.500" fill="#f0f0f0" />
        <g stroke="#232323" strokeWidth="1.150">
          {CELLS.map((c, i) => (
            <rect key={i} x={c.x} y={c.y} width={c.w} height={c.h} fill={c.fill} />
          ))}
          <rect x="523.500" y="363.200" width="247" height="161.200" fill="#b6494b" />
        </g>
        <rect x="498.500" y="498.700" width="74.200" height="48.800" rx=".5" fill="#ff0000" fillOpacity=".5" />
        <rect x="498.500" y="498.700" width="74.200" height="48.800" fill="none" stroke="#ff0000" strokeWidth="5.200" strokeLinejoin="round" />
      </svg>
    </div>
  );
}

/* ---------- identify panel ---------- */

type Row = { label?: string; value?: string; indent: string; open?: boolean; bold?: boolean; selected?: boolean; form?: boolean; link?: boolean };

const ROWS: Row[] = [
  { label: "ubc_mkrf_lidar_2016_tile_index", indent: "pl-[3px]", open: true, bold: true },
  { label: "url", value: "<a href='https://206-12-122-94.cloud...", indent: "pl-[18px]", open: true, selected: true },
  { label: "(Derived)", indent: "pl-[33px]", open: true },
  { label: "(clicked coordinate X)", value: "-122.5532°", indent: "pl-[64px]" },
  { label: "(clicked coordinate Y)", value: "49.3218°", indent: "pl-[64px]" },
  { label: "Area (Cartesian)", value: "4.5089e-05 deg²", indent: "pl-[64px]" },
  { label: "Area (Ellipsoidal — EPSG:7030)", value: "364546.2073 m²", indent: "pl-[64px]" },
  { label: "Closest X", value: "-122.5532°", indent: "pl-[64px]" },
  { label: "Closest Y", value: "49.3206°", indent: "pl-[64px]" },
  { label: "Closest vertex X", value: "-122.5555°", indent: "pl-[64px]" },
  { label: "Closest vertex Y", value: "49.3206°", indent: "pl-[64px]" },
  { label: "Closest vertex number", value: "5", indent: "pl-[64px]" },
  { label: "Feature ID", value: "111", indent: "pl-[64px]" },
  { label: "Perimeter (Cartesian)", value: "0.0275 deg", indent: "pl-[64px]" },
  { label: "Perimeter (Ellipsoidal — EPSG...", value: "2415.1065 m", indent: "pl-[64px]" },
  { label: "Vertices", value: "5", indent: "pl-[64px]" },
  { label: "(Actions)", indent: "pl-[33px]", open: true },
  { value: "View feature form", indent: "pl-[65px]", form: true },
  { label: "url", value: "https://206-12-122-94.cloud.computecar", indent: "pl-[49px]", link: true },
  { label: "size", value: "74.63 MB", indent: "pl-[49px]" },
];

function TreeRow({ row, index }: { row: Row; index: number }) {
  const bg = row.selected ? "bg-[#0078d7] text-white" : index % 2 === 1 ? "bg-[#e7e6e2]" : "bg-white";
  return (
    <div className={"flex w-full items-center " + (row.form ? "h-[23px] " : "h-5 ") + bg}>
      <div className={"flex h-full w-[274px] shrink-0 items-center whitespace-nowrap " + row.indent}>
        {row.open && (
          <svg width="10" height="5" viewBox="0 0 10 5" className={"shrink-0 " + (row.selected ? "mr-[3px]" : "mr-[6px]")}>
            <path d="M0 0H10L5 5Z" fill={row.selected ? "#0b2a4a" : "#555"} />
          </svg>
        )}
        {row.form && (
          <svg width="18" height="18" viewBox="0 0 30 30"><FormIcon /></svg>
        )}
        {row.selected ? (
          <span className="flex h-full w-[243px] items-center bg-[#1683dc] pl-[3px] pt-px">{row.label}</span>
        ) : (
          <span className={"pt-[2px] " + (row.bold ? "font-bold tracking-[-0.130px]" : "")}>{row.label}</span>
        )}
      </div>
      <div
        className={
          "min-w-0 flex-1 overflow-hidden whitespace-nowrap pt-[2px] " +
          (row.link ? "pl-[1px] tracking-[-0.050px] text-[#0000ff] underline underline-offset-2" : row.selected ? "pl-[6px] tracking-[0.020px]" : "pl-[5px]")
        }
      >
        {row.value}
      </div>
    </div>
  );
}

function Small({ children, className = "w-[31px]" }: Kids) {
  return (
    <div className={"flex shrink-0 items-center justify-center " + className}>
      <svg width="20" height="20" viewBox="0 0 30 30" className="overflow-visible">{children}</svg>
    </div>
  );
}

function TreeLines() {
  return (
    <g>
      <path d="M2 3.500H16M6 4V26M6 13H12M6 25H12" stroke="#888" strokeWidth="2" fill="none" />
      <rect x="10" y="9" width="6" height="6" fill="#f29b34" /><rect x="10" y="21" width="6" height="6" fill="#f29b34" />
    </g>
  );
}

function IdentifyPanel() {
  return (
    <div className="flex h-full w-[554px] shrink-0 flex-col bg-[#f0f0f0] pl-[8px] text-[14.500px] leading-5 tracking-[-0.150px] text-black">
      <div className="flex h-[28px] items-center pl-[4px] pr-[2px]">
        <div className="flex-1 pt-px">Identify Results</div>
        <svg width="31" height="14" viewBox="0 0 31 14" className="-mt-[1px]">
          <g fill="none" stroke="#555" strokeWidth="1">
            <rect x=".5" y=".5" width="12" height="12.500" rx="2" />
            <rect x="5.500" y="3" width="5" height="5" /><rect x="3" y="5.500" width="5" height="5" fill="#f0f0f0" />
            <rect x="17.500" y=".5" width="13" height="12.500" rx="2" />
          </g>
          <path d="M21 3.500L27 10M27 3.500L21 10" stroke="#444" strokeWidth="2.600" />
        </svg>
      </div>
      <div className="flex h-[36px] items-center pb-[4px] pl-[3px]">
        <Small className="w-[32px]"><FormIcon /></Small>
        <Sep className="ml-[3px] h-4" />
        <Small className="ml-[4px] w-[31px]"><TreeLines /><path d="M18 2H25V15H29L21.500 26L14 15H18Z" fill="#5683b3" stroke="#34587f" strokeWidth="1.500" /></Small>
        <Small className="w-[30px]"><TreeLines /><path d="M18 27H25V14H29L21.500 2L14 14H18Z" fill="#5683b3" stroke="#34587f" strokeWidth="1.500" /></Small>
        <Small className="w-[31px]"><TreeLines /><path d="M19 3H26V16H30L22.500 27L15 16H19Z" fill="#5683b3" stroke="#34587f" strokeWidth="1.500" /><path d="M10 -1L13 6L20 7L15 12L16 19L10 15.500L4 19L5 12L0 7L7 6Z" fill="#ffde20" stroke="#e69a00" strokeWidth="1.400" /></Small>
        <Sep className="ml-[4px] h-4" />
        <Small className="ml-[4px] w-[31px]"><Layers /></Small>
        <Sep className="ml-[3px] h-4" />
        <Small className="ml-[3px] w-[31px]"><Pages /></Small>
        <Small className="w-[33px] opacity-40">
          <rect x="8" y="2" width="14" height="9" fill="#ddd" stroke="#777" strokeWidth="1.500" /><rect x="2" y="10" width="26" height="12" rx="3" fill="#aaa" stroke="#888" strokeWidth="1.500" /><rect x="7" y="18" width="16" height="9" fill="#eee" stroke="#777" strokeWidth="1.500" />
        </Small>
        <Sep className="ml-[3px] h-4" />
        <Small className="ml-[3px] w-[32px]">
          <rect x="1" y="1" width="27" height="25" fill="none" stroke="#444" strokeWidth="2" strokeDasharray="3 2.500" /><InfoDisc cx={9} cy={9.5} r={8.5} /><Cursor x={13} y={11} />
        </Small>
        <Arrow className="w-[12px]" />
        <Small className="ml-[2px] w-[32px]"><Wrench /></Small>
        <Sep className="ml-[3px] h-4" />
        <Small className="ml-[3px] w-[32px]"><Book /></Small>
      </div>
      <div className="flex min-h-0 w-[546px] flex-1 flex-col border-r border-t border-[#a8a8a8] bg-white">
        <div className="flex h-[24px] shrink-0 border-b border-[#a8a8a8] bg-gradient-to-b from-white to-[#ededed]">
          <div className="w-[274px] border-r border-[#c4c4c4] pl-[3px] pt-[4px]">Feature</div>
          <div className="pl-[4px] pt-[4px]">Value</div>
        </div>
        <div className="h-[1px] shrink-0" />
        {ROWS.map((row, i) => (
          <TreeRow key={i} row={row} index={i} />
        ))}
      </div>
    </div>
  );
}

/* ---------- page ---------- */

export default function App() {
  return (
    <div className="relative h-[672px] w-[1462px] overflow-hidden bg-white font-['Open_Sans','Noto_Sans',sans-serif]">
      <div className="flex h-full w-[1457px] flex-col overflow-hidden bg-[#f0f0f0]">
        <div className="flex h-[7px] w-full items-end gap-[1px] border-t border-white">
          <div className="h-[2px] w-[28px] bg-[#d8d8d8]" />
          <div className="h-[2px] w-[59px] bg-[#d8d8d8]" />
          <div className="h-[2px] w-[186px] bg-[#d8d8d8]" />
          <div className="h-[2px] w-[142px] bg-[#d8d8d8]" />
          <div className="h-[2px] flex-1 bg-[#d8d8d8]" />
        </div>
        <NavigationToolbar />
        <EditingToolbar />
        <AttributesToolbar />
        <div className="h-[2px] w-full shrink-0 bg-[#b8b8b8]" />
        <div className="flex min-h-0 w-full flex-1 pl-[7px]">
          <MapCanvas />
          <IdentifyPanel />
        </div>
      </div>

      <div className="absolute left-0 top-0 h-[1px] w-[2px] bg-black" />
      <div className="absolute left-[406px] top-0 h-[1.500px] w-[4px] bg-[#222]" />
      <div className="absolute left-[454px] top-0 h-[1px] w-[2px] bg-[#543]" />

      <svg width="80" height="58" viewBox="875 0 80 58" className="absolute left-[875px] top-0">
        <path
          d="M901 7.500C895 7 891 7 890 10C883 13 881.500 20 881 32C880.500 44 884 49 893 52C903 55.500 917 55 927 51C940 46 947 39 947 28C947 18 942 11 934 7.500C922 2 907 0 896 4L892 7"
          fill="none"
          stroke="#ff0000"
          strokeWidth="2.200"
          strokeLinecap="round"
          strokeLinejoin="round"
        />
      </svg>
      <svg width="290" height="36" viewBox="1172 596 290 36" className="absolute left-[1172px] top-[596px] mix-blend-multiply">
        <path d="M1175.500 604.500L1184 601.500Q1205 597 1245 596.800Q1285 598 1326 606L1383 607.500L1462 609V629L1376 628.500L1322 627Q1302 624 1290 620.500Q1250 617.500 1212 619.500L1196 623L1184 624.500H1175.500Z" fill="#ffff00" />
      </svg>
    </div>
  );
}
